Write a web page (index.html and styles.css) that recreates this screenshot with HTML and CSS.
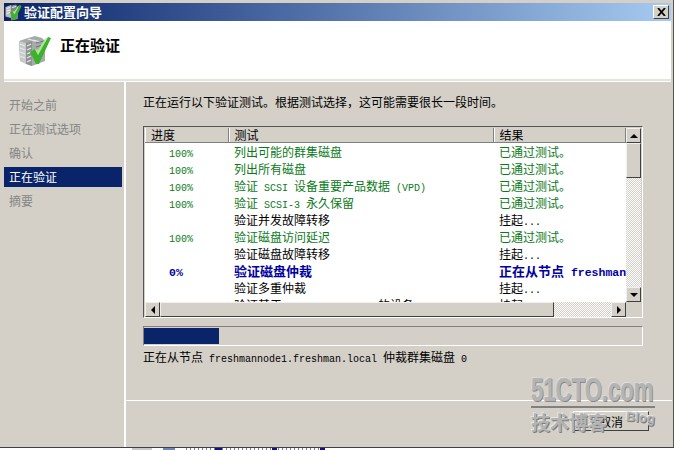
FILE: index.html
```html
<!DOCTYPE html>
<html lang="zh-CN">

<head>
    <meta charset="UTF-8">
    <title>验证配置向导</title>
    <link rel="stylesheet" href="styles.css">
</head>

<body>
    <div class="window">
        <div class="titlebar">
            <svg class="title-icon" width="17" height="17" viewBox="0 0 34 34">
                <path d="M1 6 L12 2 L12 28 L1 25 Z" fill="#b9bdbc"/>
                <path d="M12 3 L22 1 L26 6 L26 30 L12 33 Z" fill="#7f8886"/>
                <path d="M3 9 L10 7 M3 14 L10 12 M3 19 L10 17 M14 7 L22 5" stroke="#eef0ef" stroke-width="2"/>
                <path d="M10 17 L15 14 L19 21 L29 2 L33 4 L20 32 L16 32 Z" fill="#3fb02e"/>
                <path d="M15 14 L19 21 L29 2 L25 6 L19 15 Z" fill="#a8e890"/>
            </svg>
            <span class="title-text">验证配置向导</span>
            <button class="close-btn">
                <svg width="9" height="8" viewBox="0 0 9 8"><path d="M1 0 L8 8 M8 0 L1 8" stroke="#000" stroke-width="1.8"/></svg>
            </button>
        </div>

        <div class="banner">
            <svg class="banner-icon" width="34" height="32" viewBox="0 0 34 32">
                <path d="M1 6 L10 3 L17 1 L24 3 L27 6 L27 26 L14 31 L2 26 Z" fill="#a6abaa"/>
                <path d="M1 6 L8 8 L8 29 L2 26 Z" fill="#c6cac8"/>
                <path d="M8 8 L14 6 L14 31 L8 29 Z" fill="#8b9290"/>
                <path d="M2 9 L7 11 M2 13 L7 15 M2 17 L7 19 M2 21 L7 23 M9 11 L13 9 M9 15 L13 13 M9 19 L13 17 M9 23 L13 21 M9 27 L13 25 M15 5 L22 7 M10 4 L17 6" stroke="#e8ebea" stroke-width="1.2"/>
                <path d="M18 12 L25 10 M18 8 L26 6" stroke="#6f7675" stroke-width="1.2"/>
                <path d="M12 17 L17 14 L20 20 L30 2 L33 3 L21 29 L18 29 Z" fill="#3fb02e"/>
                <path d="M17 14 L20 20 L30 2 L27 4 L20 15 Z" fill="#a8e890"/>
            </svg>
            <h1 class="banner-title">正在验证</h1>
        </div>

        <div class="main">
            <ul class="steps">
                <li>开始之前</li>
                <li>正在测试选项</li>
                <li>确认</li>
                <li class="active">正在验证</li>
                <li>摘要</li>
            </ul>

            <div class="content">
                <div class="pane">
                    <p class="intro">正在运行以下验证测试。根据测试选择，这可能需要很长一段时间。</p>

                    <div class="list">
                        <div class="list-body">
                            <table class="tests">
                                <thead>
                                    <tr>
                                        <th class="col-progress">进度</th>
                                        <th class="col-test">测试</th>
                                        <th class="col-result">结果</th>
                                    </tr>
                                </thead>
                                <tbody>
                                    <tr class="ok"><td class="pct"><span class="en">100%</span></td><td>列出可能的群集磁盘</td><td>已通过测试。</td></tr>
                                    <tr class="ok"><td class="pct"><span class="en">100%</span></td><td>列出所有磁盘</td><td>已通过测试。</td></tr>
                                    <tr class="ok"><td class="pct"><span class="en">100%</span></td><td>验证<span class="en"> SCSI </span>设备重要产品数据<span class="en"> (VPD)</span></td><td>已通过测试。</td></tr>
                                    <tr class="ok"><td class="pct"><span class="en">100%</span></td><td>验证<span class="en"> SCSI-3 </span>永久保留</td><td>已通过测试。</td></tr>
                                    <tr><td></td><td>验证并发故障转移</td><td>挂起<span class="en">...</span></td></tr>
                                    <tr class="ok"><td class="pct"><span class="en">100%</span></td><td>验证磁盘访问延迟</td><td>已通过测试。</td></tr>
                                    <tr><td></td><td>验证磁盘故障转移</td><td>挂起<span class="en">...</span></td></tr>
                                    <tr class="running"><td class="pct"><span class="en">0%</span></td><td>验证磁盘仲裁</td><td><div class="clip">正在从节点<span class="en"> freshmannode1.freshman.local</span></div></td></tr>
                                    <tr><td></td><td>验证多重仲裁</td><td>挂起<span class="en">...</span></td></tr>
                                    <tr><td></td><td>验证基于<span class="en"> Microsoft MPIO </span>的设备</td><td>挂起<span class="en">...</span></td></tr>
                                </tbody>
                            </table>
                        </div>

                        <div class="vscroll">
                            <div class="sb-btn"><span class="arrow up"></span></div>
                            <div class="sb-btn vthumb"></div>
                            <div class="sb-track"></div>
                            <div class="sb-btn"><span class="arrow down"></span></div>
                        </div>

                        <div class="hscroll">
                            <div class="sb-btn"><span class="arrow left"></span></div>
                            <div class="sb-btn hthumb"></div>
                            <div class="sb-track"></div>
                            <div class="sb-btn"><span class="arrow right"></span></div>
                        </div>
                    </div>

                    <div class="progress"><div class="progress-fill" style="width: 15%"></div></div>
                    <p class="status">正在从节点<span class="en"> freshmannode1.freshman.local </span>仲裁群集磁盘<span class="en"> 0</span></p>
                </div>

                <div class="footer">
                    <button class="cancel">取消</button>
                </div>
            </div>
        </div>

        <div class="watermark">
            <div class="wm-logo">51CTO.com</div>
            <div class="wm-rule"></div>
            <div class="wm-sub">技术博客</div>
            <div class="wm-blog">Blog</div>
        </div>
    </div>
    <div class="under"></div>
</body>

</html>
```

FILE: styles.css
```css
* {
    box-sizing: border-box;
}

html, body {
    margin: 0;
    padding: 0;
}

body {
    width: 674px;
    height: 450px;
    overflow: hidden;
    background: #fff;
    font-family: "Noto Sans CJK SC", sans-serif;
    font-size: 12px;
    color: #000;
}

.en {
    font-family: "Liberation Mono", monospace;
    font-size: 10px;
    line-height: 1;
    white-space: pre;
}

.window {
    position: relative;
    width: 674px;
    height: 447px;
    padding: 3px 2px 0 4px;
    background: #d4d0c8;
    border-right: 1px solid #555;
    display: flex;
    flex-direction: column;
}

/* bit of the window behind, showing under the dialog */
.under {
    height: 3px;
    border-top: 1px solid #404040;
    background:
        linear-gradient(to right, #c8c8c8, #c8c8c8) 132px 0 / 20px 100% no-repeat,
        linear-gradient(to right, #6f86b8, #6f86b8) 163px 0 / 12px 100% no-repeat,
        linear-gradient(to right, #10108a, #10108a) 215px 0 / 7px 100% no-repeat,
        linear-gradient(to right, #10108a, #10108a) 272px 0 / 5px 100% no-repeat,
        linear-gradient(to right, #10108a, #10108a) 320px 0 / 5px 100% no-repeat,
        repeating-linear-gradient(to right, #7a7aa8 0 1px, #fff 1px 4px) 186px 0 / 140px 100% no-repeat,
        #fff;
}

.titlebar {
    height: 18px;
    flex: none;
    display: flex;
    align-items: center;
    padding: 0 2px 0 1px;
    background: linear-gradient(to right, #0a246a, #a6caf0);
}

.title-icon {
    flex: none;
    margin-right: 2px;
}

.title-text {
    flex: 1;
    color: #fff;
    font-size: 13px;
    font-weight: bold;
    line-height: 18px;
}

.close-btn {
    width: 16px;
    height: 14px;
    padding: 0;
    display: flex;
    justify-content: center;
    align-items: center;
    background: #d4d0c8;
    border: 1px solid;
    border-color: #fff #404040 #404040 #fff;
}

.banner {
    height: 60px;
    flex: none;
    display: flex;
    align-items: center;
    padding-left: 14px;
    background: #fff;
    border-bottom: 2px solid #e6e3dc;
}

.banner-icon {
    flex: none;
    margin: 1px 8px 0 0;
}

.banner-title {
    margin: 0 0 11px;
    font-size: 15px;
    font-weight: bold;
}

.main {
    flex: 1;
    display: flex;
    border-top: 1px solid #fff;
}

.steps {
    width: 122px;
    flex: none;
    margin: 0;
    padding: 13px 0 0;
    list-style: none;
    border-right: 2px solid #fff;
}

.steps li {
    height: 20px;
    line-height: 20px;
    margin-bottom: 4px;
    margin-right: 2px;
    padding-left: 5px;
    color: #858585;
}

.steps li.active {
    background: #0a246a;
    color: #fff;
}

.content {
    flex: 1;
    display: flex;
    flex-direction: column;
}

.pane {
    height: 319px;
    flex: none;
    padding: 11px 29px 0 17px;
    border-bottom: 1px solid #fff;
}

.intro {
    margin: 0 0 15px;
    height: 18px;
    line-height: 18px;
}

.list {
    width: 500px;
    height: 192px;
    display: grid;
    grid-template-columns: 1fr 15px;
    grid-template-rows: 174px 15px;
    padding: 1px;
    border: 1px solid;
    border-color: #555 #fff #fff #555;
    background: #d4d0c8;
}

.list-body {
    overflow: hidden;
    background: #fff;
}

.tests {
    width: 481px;
    table-layout: fixed;
    border-collapse: collapse;
}

.tests th {
    height: 14px;
    padding: 0 0 0 6px;
    font-weight: normal;
    line-height: 14px;
    text-align: left;
    background: #d4d0c8;
    border-right: 1px solid #808080;
    border-bottom: 1px solid #808080;
    box-shadow: inset 1px 0 0 #fff;
}

.col-progress {
    width: 83px;
}

.col-test {
    width: 265px;
}

.tests td {
    height: 17px;
    padding: 0 0 0 6px;
    line-height: 17px;
    white-space: nowrap;
    overflow: hidden;
}

.tests td.pct {
    padding-left: 24px;
}

.clip {
    overflow: hidden;
}

.ok {
    color: #0b7a1a;
}

.running {
    color: #0000a0;
    font-size: 13px;
    font-weight: bold;
}

.running .en {
    font-size: 11.5px;
}

.vscroll, .hscroll {
    display: flex;
    background-color: #fff;
}

.vscroll {
    flex-direction: column;
}

.sb-btn {
    width: 15px;
    height: 15px;
    flex: none;
    display: flex;
    justify-content: center;
    align-items: center;
    background: #d4d0c8;
    border: 1px solid;
    border-color: #f2f0ec #404040 #404040 #f2f0ec;
}

.vthumb {
    height: 35px;
}

.hthumb {
    width: 394px;
}

.sb-track {
    flex: 1;
    background-color: #fff;
    background-image: repeating-conic-gradient(#d4d0c8 0 25%, #fff 0 50%);
    background-size: 2px 2px;
}

.hscroll {
    height: 15px;
}

.arrow {
    width: 0;
    height: 0;
    border: 4px solid transparent;
}

.arrow.up {
    border-top: 0;
    border-bottom-color: #000;
}

.arrow.down {
    border-bottom: 0;
    border-top-color: #000;
}

.arrow.left {
    border-left: 0;
    border-right-color: #000;
}

.arrow.right {
    border-right: 0;
    border-left-color: #000;
}

.progress {
    width: 500px;
    height: 20px;
    margin-top: 8px;
    padding: 1px 0;
    border: 1px solid;
    border-color: #808080 #fff #fff #808080;
}

.progress-fill {
    height: 100%;
    background: #0a246a;
}

.status {
    margin: 2px 0 0;
    height: 18px;
    line-height: 18px;
}

.footer {
    flex: 1;
    display: flex;
    justify-content: flex-end;
    align-items: flex-start;
    padding: 10px 23px 0 0;
}

.cancel {
    width: 76px;
    height: 20px;
    padding: 0;
    font-family: inherit;
    font-size: 12px;
    background: #d4d0c8;
    border: 1px solid;
    border-color: #fff #404040 #404040 #fff;
}

/* site stamp sits on top of the dialog */
.watermark {
    position: absolute;
    left: 531px;
    top: 374px;
    width: 124px;
    height: 62px;
    color: #b4b4b4;
    text-shadow: 1px 1px 0 #7c7c7c, -1px -1px 0 #e6e6e6;
}

.wm-logo {
    font-family: "Liberation Sans", sans-serif;
    font-size: 33px;
    font-weight: bold;
    line-height: 32px;
    white-space: nowrap;
    -webkit-text-stroke: 0.6px #b4b4b4;
    transform: scaleX(0.67);
    transform-origin: left top;
}

.wm-rule {
    height: 2px;
    background: #808080;
}

.wm-sub {
    position: absolute;
    left: 0;
    top: 37px;
    font-size: 19px;
    font-weight: bold;
    line-height: 22px;
    white-space: nowrap;
}

.wm-blog {
    position: absolute;
    left: 95px;
    top: 36px;
    font-family: "Liberation Sans", sans-serif;
    font-size: 13px;
    font-weight: bold;
    transform: rotate(5deg);
}
```
